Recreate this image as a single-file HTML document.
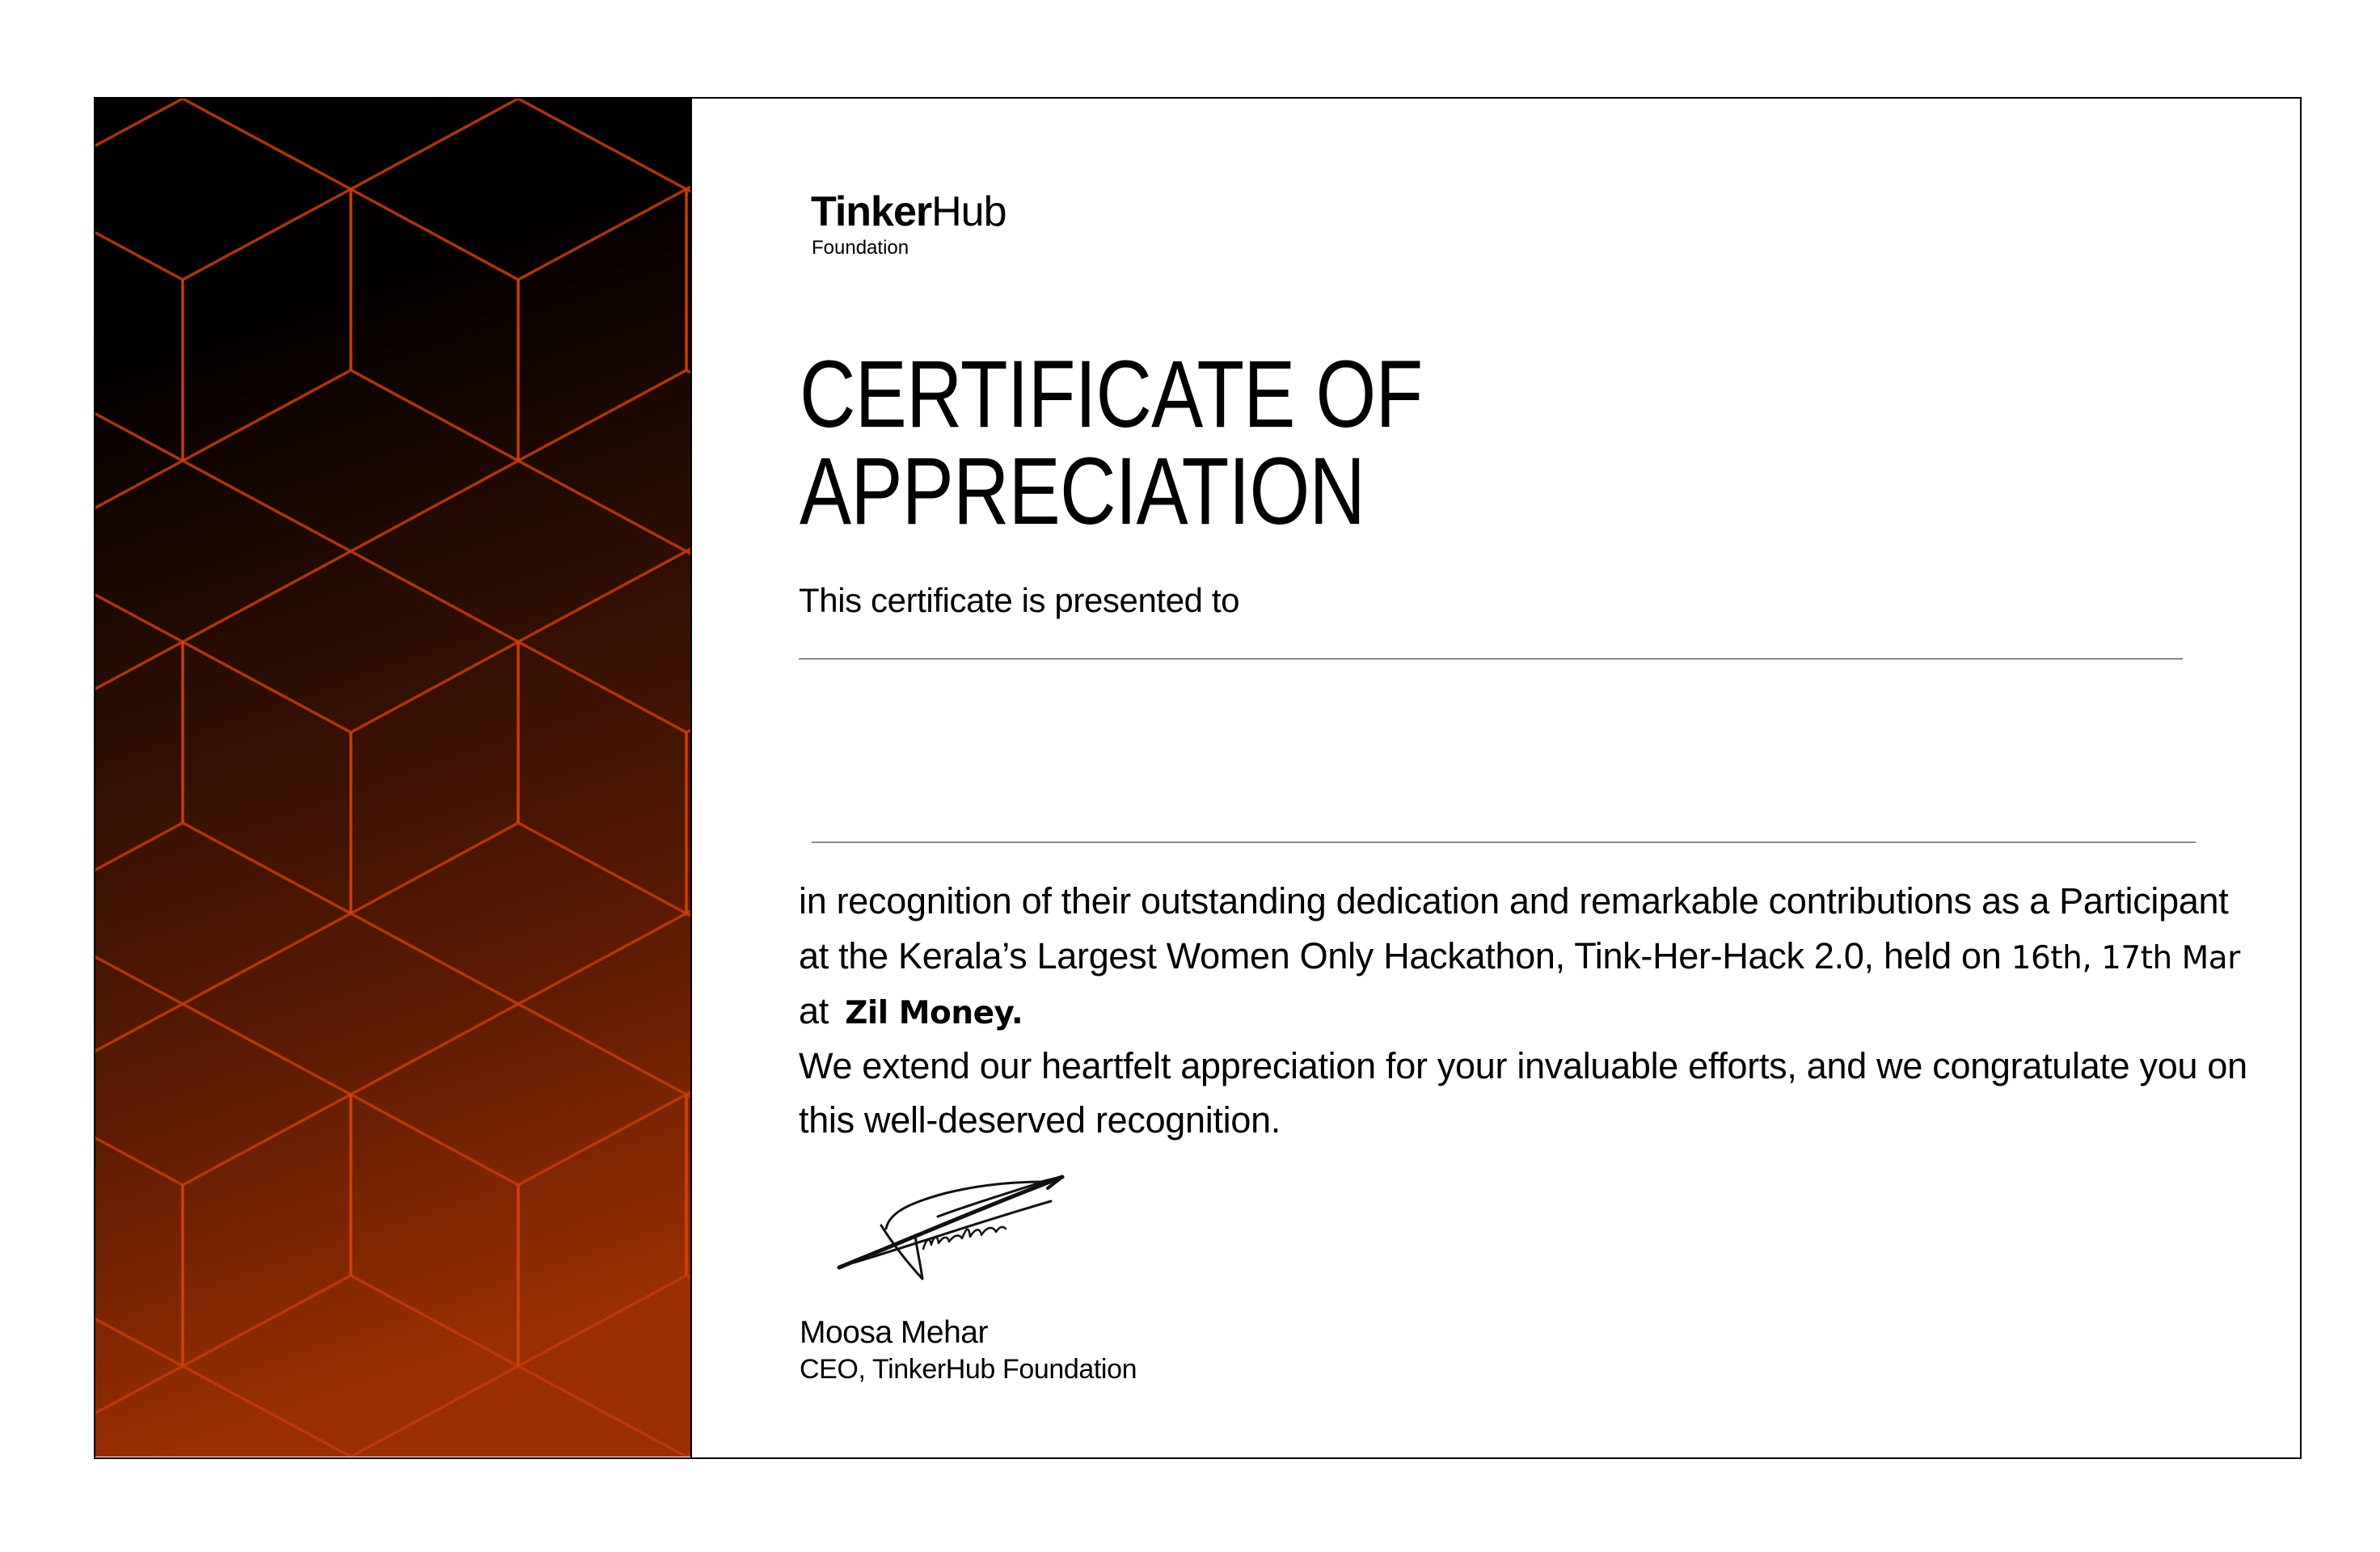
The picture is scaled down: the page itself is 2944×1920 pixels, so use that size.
<!DOCTYPE html>
<html><head><meta charset="utf-8">
<style>
html,body{margin:0;padding:0;background:#fff;}
body{width:2944px;height:1920px;position:relative;overflow:hidden;font-family:"Liberation Sans",sans-serif;color:#000;}
.frame{position:absolute;left:116px;top:120px;width:2727px;height:1681px;border:2px solid #000;}
.t{position:absolute;white-space:nowrap;line-height:1;}
.h{font-size:118px;transform:scaleX(0.815);transform-origin:0 0;letter-spacing:-1px;}
.p{font-size:45px;letter-spacing:-0.3px;}
.rule{position:absolute;height:2px;background:#8a8a8a;}
</style></head><body>
<div class="frame"></div>
<svg width="2944" height="1920" style="position:absolute;left:0;top:0">
<defs>
<linearGradient id="bg" x1="0" y1="0" x2="0.15" y2="1">
<stop offset="0" stop-color="#000"/>
<stop offset="0.2" stop-color="#030000"/>
<stop offset="0.45" stop-color="#2a0d02"/>
<stop offset="0.75" stop-color="#5e1c02"/>
<stop offset="1" stop-color="#9a2e02"/>
</linearGradient>
<clipPath id="cp"><rect x="118" y="122" width="737" height="1680"/></clipPath>
</defs>
<rect x="118" y="122" width="737" height="1680" fill="url(#bg)"/>
<g clip-path="url(#cp)" fill="none" stroke="#c23a06" stroke-width="3.5" stroke-opacity="0.9" stroke-linejoin="miter">
<polyline points="18,234 226,122 434,234 641,122 849,234 1056,122"/>
<polyline points="18,234 226,346 434,234 641,346 849,234 1056,346"/>
<polyline points="18,458 226,570 434,458 641,570 849,458 1056,570"/>
<polyline points="18,682 226,570 434,682 641,570 849,682 1056,570"/>
<polyline points="18,682 226,794 434,682 641,794 849,682 1056,794"/>
<polyline points="18,906 226,794 434,906 641,794 849,906 1056,794"/>
<polyline points="18,1130 226,1018 434,1130 641,1018 849,1130 1056,1018"/>
<polyline points="18,1130 226,1242 434,1130 641,1242 849,1130 1056,1242"/>
<polyline points="18,1354 226,1242 434,1354 641,1242 849,1354 1056,1242"/>
<polyline points="18,1354 226,1466 434,1354 641,1466 849,1354 1056,1466"/>
<polyline points="18,1578 226,1690 434,1578 641,1690 849,1578 1056,1690"/>
<polyline points="18,1802 226,1690 434,1802 641,1690 849,1802 1056,1690"/>
<g stroke="#d84408">
<line x1="434" y1="234" x2="434" y2="458"/><line x1="849" y1="234" x2="849" y2="458"/>
<line x1="226" y1="346" x2="226" y2="570"/><line x1="641" y1="346" x2="641" y2="570"/>
<line x1="226" y1="794" x2="226" y2="1018"/><line x1="641" y1="794" x2="641" y2="1018"/>
<line x1="434" y1="906" x2="434" y2="1130"/><line x1="849" y1="906" x2="849" y2="1130"/>
<line x1="434" y1="1354" x2="434" y2="1578"/><line x1="849" y1="1354" x2="849" y2="1578"/>
<line x1="226" y1="1466" x2="226" y2="1690"/><line x1="641" y1="1466" x2="641" y2="1690"/>
</g>
</g>
<line x1="855" y1="120" x2="855" y2="1803" stroke="#000" stroke-width="2"/>
<g fill="none" stroke="#111" stroke-linecap="round" stroke-linejoin="round">
<path d="M1038 1568 C1120 1535 1200 1500 1314 1456" stroke-width="5"/>
<path d="M1056 1562 C1130 1540 1210 1512 1300 1486" stroke-width="3"/>
<path d="M1290 1462 L1314 1456 L1296 1470" stroke-width="4"/>
<path d="M1096 1520 C1100 1500 1125 1488 1170 1476 C1210 1466 1250 1462 1290 1462 C1250 1475 1200 1490 1160 1505" stroke-width="3"/>
<path d="M1090 1516 C1105 1540 1125 1565 1141 1582 C1138 1560 1134 1545 1132 1528" stroke-width="3"/>
<path d="M1142 1545 C1146 1532 1150 1530 1152 1540 C1155 1528 1160 1528 1161 1538 C1166 1530 1172 1528 1174 1536 C1180 1528 1186 1526 1190 1532 C1195 1520 1198 1515 1200 1530 C1206 1520 1212 1518 1214 1528 C1220 1518 1228 1516 1232 1524 C1236 1518 1240 1516 1244 1520" stroke-width="2.5"/>
</g>
</svg>
<div class="t" style="left:1003px;top:236px;font-size:52px;letter-spacing:-1px"><b>Tinker</b>Hub</div>
<div class="t" style="left:1004px;top:295px;font-size:24px;">Foundation</div>
<div class="t h" style="left:989px;top:429px;">CERTIFICATE OF</div>
<div class="t h" style="left:989px;top:549px;">APPRECIATION</div>
<div class="t" style="left:988px;top:722px;font-size:42px;letter-spacing:-0.4px;">This certificate is presented to</div>
<div class="rule" style="left:988px;top:814px;width:1712px;"></div>
<div class="rule" style="left:1004px;top:1041px;width:1712px;"></div>
<div class="t p" style="left:988px;top:1092px;">in recognition of their outstanding dedication and remarkable contributions as a Participant</div>
<div class="t p" style="left:988px;top:1160px;">at the Kerala’s Largest Women Only Hackathon, Tink-Her-Hack 2.0, held on <span style="font-family:'DejaVu Sans',sans-serif;font-size:39px;letter-spacing:-0.5px">16th, 17th Mar</span></div>
<div class="t p" style="left:988px;top:1228px;">at <b style="font-family:'DejaVu Sans',sans-serif;font-size:39px;margin-left:8px;letter-spacing:-0.5px">Zil Money.</b></div>
<div class="t p" style="left:988px;top:1296px;">We extend our heartfelt appreciation for your invaluable efforts, and we congratulate you on</div>
<div class="t p" style="left:988px;top:1363px;">this well-deserved recognition.</div>
<div class="t" style="left:989px;top:1629px;font-size:39px;letter-spacing:-0.5px">Moosa Mehar</div>
<div class="t" style="left:989px;top:1677px;font-size:34px;letter-spacing:-0.4px">CEO, TinkerHub Foundation</div>
</body></html>
